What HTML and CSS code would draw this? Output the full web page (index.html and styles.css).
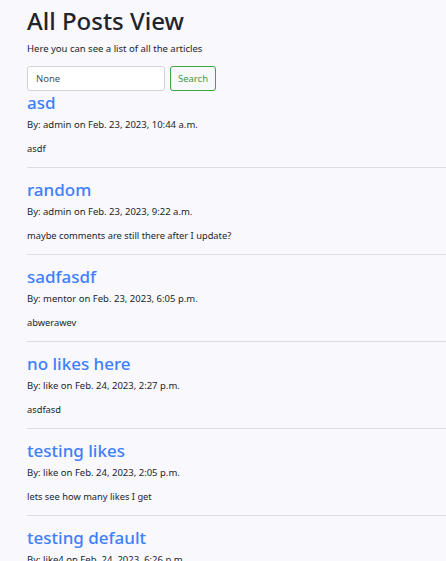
FILE: index.html
```html
<!DOCTYPE html>
<html lang="en">
<head>
<meta charset="utf-8">
<title>All Posts View</title>
<link rel="stylesheet" href="styles.css">
</head>
<body>
<main class="page">
  <header class="intro">
    <h1 class="heading">All Posts View</h1>
    <p class="lead">Here you can see a list of all the articles</p>
    <form class="search">
      <input class="search-input" type="text" value="None">
      <button class="search-btn" type="button">Search</button>
    </form>
  </header>
  <section class="posts">
    <article class="post">
      <h2 class="post-title"><a href="#">asd</a></h2>
      <p class="meta">By: admin on Feb. 23, 2023, 10:44 a.m.</p>
      <p class="body">asdf</p>
    </article>
    <hr class="divider">
    <article class="post">
      <h2 class="post-title"><a href="#">random</a></h2>
      <p class="meta">By: admin on Feb. 23, 2023, 9:22 a.m.</p>
      <p class="body">maybe comments are still there after I update?</p>
    </article>
    <hr class="divider">
    <article class="post">
      <h2 class="post-title"><a href="#">sadfasdf</a></h2>
      <p class="meta">By: mentor on Feb. 23, 2023, 6:05 p.m.</p>
      <p class="body">abwerawev</p>
    </article>
    <hr class="divider">
    <article class="post">
      <h2 class="post-title"><a href="#">no likes here</a></h2>
      <p class="meta">By: like on Feb. 24, 2023, 2:27 p.m.</p>
      <p class="body">asdfasd</p>
    </article>
    <hr class="divider">
    <article class="post">
      <h2 class="post-title"><a href="#">testing likes</a></h2>
      <p class="meta">By: like on Feb. 24, 2023, 2:05 p.m.</p>
      <p class="body">lets see how many likes I get</p>
    </article>
    <hr class="divider">
    <article class="post">
      <h2 class="post-title"><a href="#">testing default</a></h2>
      <p class="meta">By: like4 on Feb. 24, 2023, 6:26 p.m.</p>
      <p class="body">default test</p>
    </article>
  </section>
</main>
</body>
</html>
```
FILE: styles.css
```css
* { box-sizing: border-box; }
html, body { margin: 0; padding: 0; }
body {
  background: #f8f8fd;
  color: #212529;
  font-family: "Noto Sans", "Open Sans", sans-serif;
  font-size: 10px;
  overflow: hidden;
}
.page {
  padding: 5px 0 0 27px;
}
.heading {
  margin: 0;
  font-size: 24px;
  font-weight: 500;
  line-height: 32px;
}
.lead {
  margin: 5px 0 0;
  font-size: 9.5px;
  line-height: 14px;
}
.search {
  display: flex;
  gap: 5px;
  margin-top: 10px;
}
.search-input {
  width: 138px;
  height: 25px;
  padding: 0 8px;
  border: 1px solid #ced4da;
  border-radius: 3px;
  background: #fff;
  color: #495057;
  font: inherit;
  font-size: 9.5px;
}
.search-btn {
  width: 46px;
  height: 25px;
  padding: 0;
  border: 1px solid #3aa845;
  border-radius: 3px;
  background: transparent;
  color: #3a9e45;
  font: inherit;
  font-size: 9.5px;
}
.posts {
  margin-top: 1px;
}
.post-title {
  margin: 0;
  font-size: 17px;
  font-weight: 500;
  line-height: 22px;
}
.post-title a {
  color: #3f7efc;
  text-decoration: none;
}
.meta {
  margin: 4px 0 0;
  font-size: 9.5px;
  line-height: 14px;
}
.body {
  margin: 10px 0 0;
  font-size: 9.3px;
  line-height: 14px;
}
.divider {
  margin: 11px 0 11px;
  border: 0;
  border-top: 1px solid #dcdce2;
}
```
